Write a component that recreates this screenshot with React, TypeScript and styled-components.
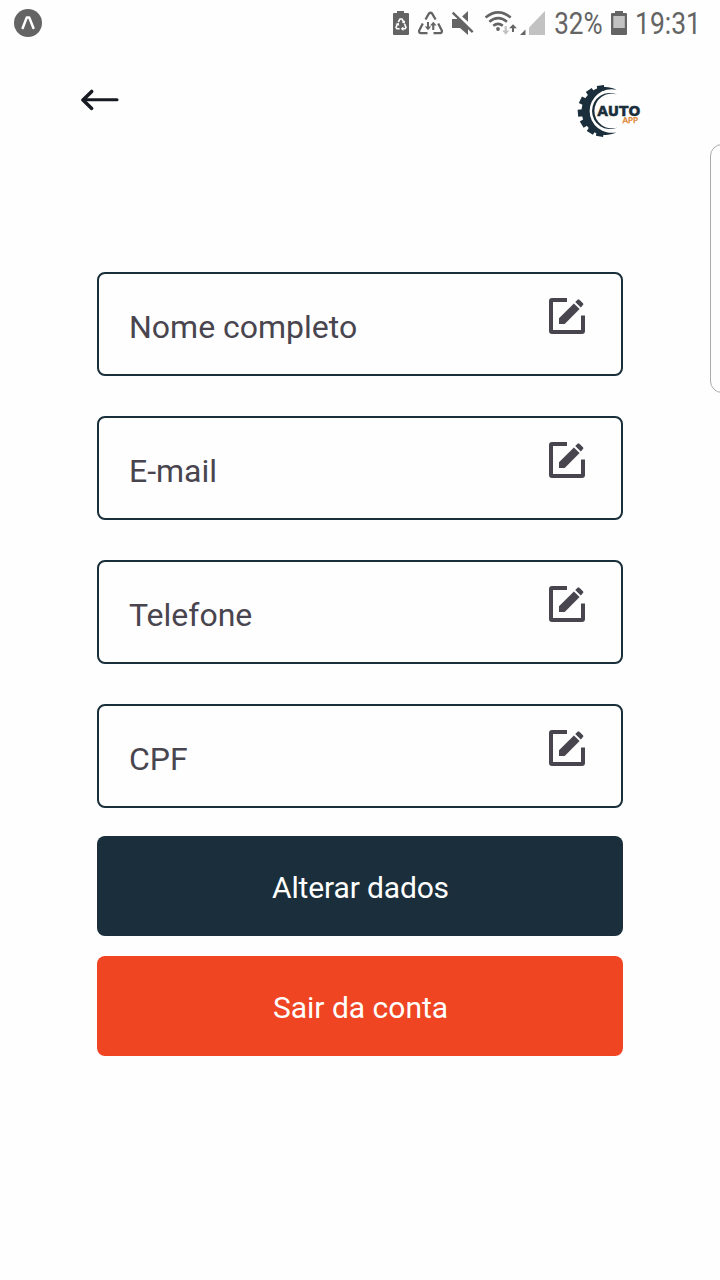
import React from "react";
import styled, { createGlobalStyle } from "styled-components";

const GlobalStyle = createGlobalStyle`
  * { box-sizing: border-box; }
  body { margin: 0; background: #fefefe; font-family: Roboto, "Liberation Sans", sans-serif; }
`;

const Screen = styled.div`
  position: relative;
  width: 720px;
  height: 1280px;
  overflow: hidden;
  display: flex;
  flex-direction: column;
`;

const StatusBar = styled.header`
  height: 48px;
  flex: none;
  display: flex;
  justify-content: space-between;
`;

const TopBar = styled.nav`
  height: 100px;
  flex: none;
  display: flex;
  justify-content: space-between;
  align-items: flex-start;
  padding: 36px 75px 0 79px;
`;

const BackButton = styled.button`
  border: 0;
  padding: 0;
  background: none;
  display: flex;
`;

const Form = styled.main`
  width: 526px;
  margin: 124px 0 0 97px;
  display: flex;
  flex-direction: column;
`;

const Fields = styled.div`
  display: flex;
  flex-direction: column;
  gap: 40px;
`;

const Field = styled.div`
  height: 104px;
  border: 2px solid #1a2e3b;
  border-radius: 8px;
  display: flex;
  justify-content: space-between;
  align-items: flex-start;
  padding: 24px 35px 0 30px;
`;

const FieldLabel = styled.span`
  font-size: 32px;
  line-height: 38px;
  color: #49454f;
  margin-top: 10px;
`;

const Actions = styled.div`
  display: flex;
  flex-direction: column;
  gap: 20px;
  margin-top: 28px;
`;

const ActionButton = styled.button<{ $color: string; $tracking?: string }>`
  height: 100px;
  border: 0;
  border-radius: 8px;
  background: ${(p) => p.$color};
  color: #fff;
  font: 400 30px/36px Roboto, sans-serif;
  letter-spacing: ${(p) => p.$tracking ?? "0"};
  padding: 4px 0 0 1px;
`;

const EdgeHandle = styled.div`
  position: absolute;
  left: 710px;
  top: 144px;
  width: 24px;
  height: 249px;
  border: 1px solid #aaa;
  border-radius: 13px;
`;

const EditIcon = () => (
  <svg width="37" height="36" viewBox="0 0 37 36" fill="#49454f">
    <path d="M18 0H3Q0 0 0 3V33Q0 36 3 36H33Q36 36 36 33V17.5H32V32H4V4H18Z" />
    <path d="M10 20.3V26H15.7L30.6 11.1L24.9 5.4Z" />
    <path d="M26.2 4.1L28.6 1.7Q29.5 .9 30.4 1.7L34 5.3Q34.9 6.2 34 7.1L31.8 9.6Z" />
  </svg>
);

const BackArrow = () => (
  <svg width="42" height="32" viewBox="79 84 42 32" fill="none" stroke="#171a22" strokeWidth="3" strokeLinecap="round" strokeLinejoin="round">
    <path d="M117 99.8H83" />
    <path d="M91.7 91.4L83 100L91.7 108.4" strokeWidth="3.5" />
  </svg>
);

const ExpoIcon = () => (
  <svg width="50" height="48" viewBox="0 0 50 48">
    <circle cx="28" cy="23" r="14" fill="#646464" />
    <path d="M22.7 28L26.7 17.6H29.3L33.4 28" fill="none" stroke="#fff" strokeWidth="2.5" strokeLinecap="round" strokeLinejoin="round" />
  </svg>
);

const StatusIcons = () => (
  <svg width="340" height="48" viewBox="380 0 340 48" fill="#646464">
    <path d="M393 14Q393 13 394 13H397V11H404V13H408Q409 13 409 14V34Q409 35 408 35H394Q393 35 393 34Z" />
    <g fill="none" stroke="#fff" strokeWidth="1.6">
      <path d="M398.3 22L400 19H402L403.7 22" />
      <path d="M397.4 24L396 27.4L397 28.8H399.6" />
      <path d="M404.6 24L406 27.4L405 28.8H402" />
    </g>
    <path d="M404.9 20.4V23.8L401.7 22.5ZM395.4 24L398.7 22.7L399.2 25.8ZM403.4 26.5V31L400.8 28.8Z" fill="#fff" />

    <g fill="none" stroke="#646464" strokeWidth="2.3" strokeLinejoin="round">
      <path d="M425.5 19.5L429 13.4Q430.5 12 432 13.4L435.6 19.5" />
      <path d="M422.8 23.5L419.2 30.5Q418.6 33 421 33.2H427.5" />
      <path d="M438.2 23.5L441.8 30.5Q442.3 33 440 33.2H433.5" />
    </g>
    <path d="M427 22H429V26.4H431.2L428 30.2L424.8 26.4H427ZM432.2 30V25.6H430L433.3 21.8L436.6 25.6H434.3V30Z" />

    <path d="M452 19H458.5L468 28V35L460 28H452ZM462.1 16.4L468 11V21.7Z" />
    <path d="M452.7 12.7L472.7 32.2" fill="none" stroke="#646464" strokeWidth="2.4" />

    <g fill="none" stroke="#646464" strokeWidth="2.5">
      <path d="M485.6 17.5Q498.2 7.2 510.7 17.5" />
      <path d="M489.3 21.8Q498.2 14.5 507 21.8" />
      <path d="M493.2 25.8Q498.2 22 502.8 25.8" />
    </g>
    <circle cx="498" cy="29" r="1.9" />
    <path d="M504.6 26H506.8V30.4H509.4L505.7 34.7L502.2 30.4H504.6Z" fill="#c2c2c2" />
    <path d="M512 32V28.3H509.2L513 24.2L516.9 28.3H514V32Z" />

    <path d="M525.5 29.5V35H520Z" />
    <path d="M545 11V35H529V27.5Z" fill="#c2c2c2" />

    <path d="M611 14Q611 13 612 13H615V11H623V13H626Q627 13 627 14V34Q627 35 626 35H612Q611 35 611 34Z" />
    <path d="M613.3 16H624.8V28H613.3Z" fill="#c2c2c2" />

    <g fontFamily="Roboto, sans-serif" fontSize="30.5">
      <text x="554.2" y="34" textLength="48.5" lengthAdjust="spacingAndGlyphs">32%</text>
      <text x="635" y="34" textLength="66" lengthAdjust="spacingAndGlyphs">19:31</text>
    </g>
  </svg>
);

const teeth = [263, 235, 206, 175, 148, 122, 99];

const Logo = () => (
  <svg width="68" height="54" viewBox="577 84 68 54" fill="#1a2e3b">
    {teeth.map((angle) => (
      <rect key={angle} x="20.5" y="-3.6" width="5.2" height="7.2" transform={`translate(603.5 111) rotate(${angle})`} />
    ))}
    <path d="M616.5 89.8A23.9 23.9 0 1 0 616.5 132.2A21.8 21.8 0 1 1 616.5 89.8Z" />
    <path d="M617.5 94.6A18.02 18.02 0 1 0 617.5 127.4A17.37 17.37 0 1 1 617.5 94.6Z" />
    <text x="597.3" y="116.2" fontFamily="'DejaVu Sans', sans-serif" fontWeight="700" fontSize="14.5" stroke="#1a2e3b" strokeWidth=".5" textLength="43" lengthAdjust="spacingAndGlyphs">AUTO</text>
    <text x="622.5" y="122.9" fontFamily="'DejaVu Sans', sans-serif" fontSize="7.8" fill="#df8a3c" stroke="#df8a3c" strokeWidth=".4" textLength="15.5" lengthAdjust="spacingAndGlyphs">APP</text>
  </svg>
);

const fields = ["Nome completo", "E-mail", "Telefone", "CPF"];

export default function App() {
  return (
    <Screen>
      <GlobalStyle />
      <StatusBar>
        <ExpoIcon />
        <StatusIcons />
      </StatusBar>
      <TopBar>
        <BackButton aria-label="Voltar">
          <BackArrow />
        </BackButton>
        <Logo />
      </TopBar>
      <Form>
        <Fields>
          {fields.map((label) => (
            <Field key={label}>
              <FieldLabel>{label}</FieldLabel>
              <EditIcon />
            </Field>
          ))}
        </Fields>
        <Actions>
          <ActionButton $color="#1a2e3b" $tracking="-0.15px">Alterar dados</ActionButton>
          <ActionButton $color="#f04523">Sair da conta</ActionButton>
        </Actions>
      </Form>
      <EdgeHandle />
    </Screen>
  );
}
